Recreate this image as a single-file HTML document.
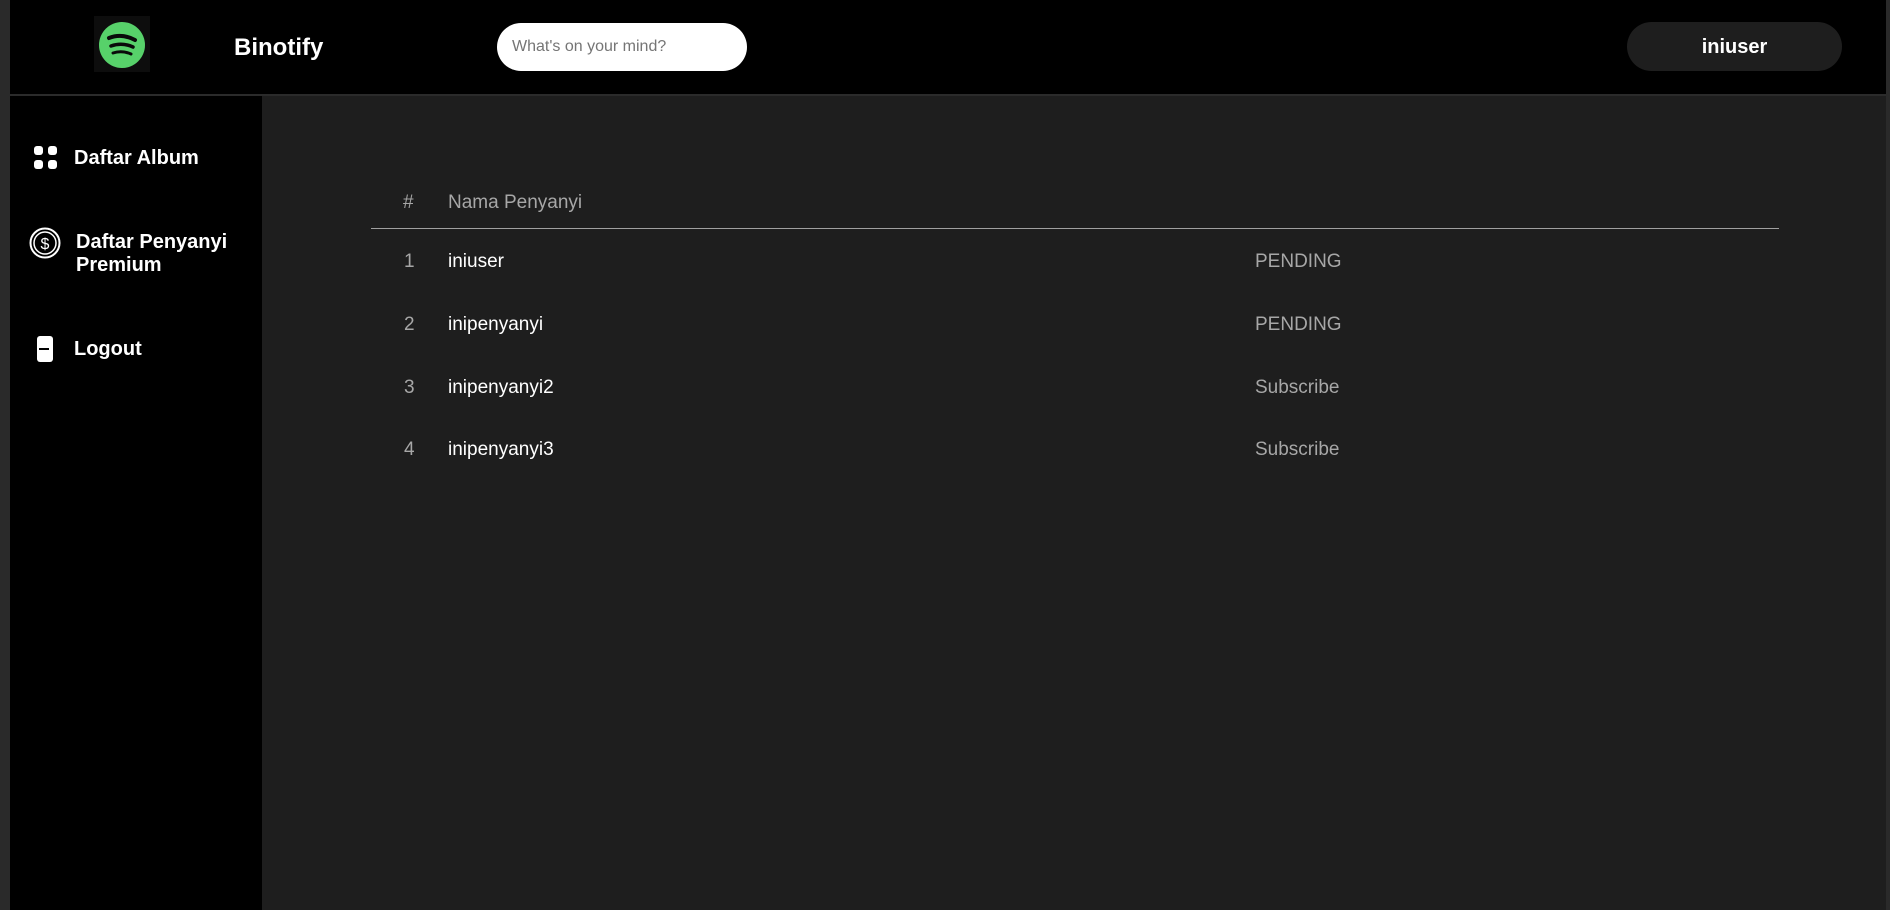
<!DOCTYPE html>
<html><head><style>
*{margin:0;padding:0;box-sizing:border-box}
body{width:1890px;height:910px;background:#2a2a2a;font-family:"Liberation Sans",sans-serif;position:relative;overflow:hidden}
.hdr{position:absolute;left:10px;top:0;width:1876px;height:94px;background:#000}
.sep{position:absolute;left:10px;top:94px;width:1876px;height:2px;background:#2b2b2b}
.side{position:absolute;left:10px;top:96px;width:252px;height:814px;background:#000}
.main{position:absolute;left:262px;top:96px;width:1624px;height:814px;background:#1e1e1e}
.abs{position:absolute}
.t{position:absolute;color:#fff;font-weight:bold;font-size:20px}
.g{position:absolute;color:#a7a7a7;font-size:19px;line-height:22px}
.w{position:absolute;color:#fff;font-size:19px;line-height:22px}
</style></head><body>
<div class="hdr"></div><div class="sep"></div><div class="side"></div><div class="main"></div>
<div class="abs" style="left:94px;top:16px;width:56px;height:56px;background:#0d0d0d"></div>
<svg class="abs" style="left:99px;top:22px" width="46" height="46" viewBox="0 0 46 46">
<circle cx="23" cy="23" r="23" fill="#57d16a"/>
<path d="M10 16 Q23 11 36 18" stroke="#0a0a0a" stroke-width="4" fill="none" stroke-linecap="round"/>
<path d="M12 24 Q23 20 34 25" stroke="#0a0a0a" stroke-width="3.5" fill="none" stroke-linecap="round"/>
<path d="M14 31 Q23 28 32 32" stroke="#0a0a0a" stroke-width="3" fill="none" stroke-linecap="round"/>
</svg>
<div class="t" style="left:234px;top:34px;font-size:24px">Binotify</div>
<div class="abs" style="left:497px;top:23px;width:250px;height:48px;background:#fff;border-radius:24px"></div>
<div class="abs" style="left:512px;top:38px;font-size:16px;color:#757575">What's on your mind?</div>
<div class="abs" style="left:1627px;top:22px;width:215px;height:49px;background:#1e1e1e;border-radius:25px"></div>
<div class="t" style="left:1627px;width:215px;text-align:center;top:36px">iniuser</div>
<svg class="abs" style="left:34px;top:146px" width="24" height="24"><rect x="0" y="0" width="9" height="9" rx="3" fill="#fff"/><rect x="14" y="0" width="9" height="9" rx="3" fill="#fff"/><rect x="0" y="14" width="9" height="9" rx="3" fill="#fff"/><rect x="14" y="14" width="9" height="9" rx="3" fill="#fff"/></svg>
<div class="t" style="left:74px;top:147px">Daftar Album</div>
<svg class="abs" style="left:29px;top:227px" width="32" height="32"><circle cx="16" cy="16" r="14.5" stroke="#fff" stroke-width="2" fill="none"/><circle cx="16" cy="16" r="11" stroke="#fff" stroke-width="1.5" fill="none"/><text x="16" y="22" text-anchor="middle" fill="#fff" font-size="16" font-family="Liberation Sans">$</text></svg>
<div class="t" style="left:76px;top:231px;line-height:23px">Daftar Penyanyi<br>Premium</div>
<svg class="abs" style="left:37px;top:336px" width="17" height="27"><rect x="0" y="0" width="16" height="26" rx="3" fill="#fff"/><rect x="2" y="12" width="10" height="2" fill="#000"/></svg>
<div class="t" style="left:74px;top:338px">Logout</div>
<div class="g" style="left:403px;top:192px">#</div>
<div class="g" style="left:448px;top:192px">Nama Penyanyi</div>
<div class="abs" style="left:371px;top:228px;width:1408px;height:1px;background:#a0a0a0"></div>
<div class="g" style="left:404px;top:251px">1</div><div class="w" style="left:448px;top:251px">iniuser</div><div class="g" style="left:1255px;top:251px">PENDING</div>
<div class="g" style="left:404px;top:314px">2</div><div class="w" style="left:448px;top:314px">inipenyanyi</div><div class="g" style="left:1255px;top:314px">PENDING</div>
<div class="g" style="left:404px;top:377px">3</div><div class="w" style="left:448px;top:377px">inipenyanyi2</div><div class="g" style="left:1255px;top:377px">Subscribe</div>
<div class="g" style="left:404px;top:439px">4</div><div class="w" style="left:448px;top:439px">inipenyanyi3</div><div class="g" style="left:1255px;top:439px">Subscribe</div>
</body></html>
